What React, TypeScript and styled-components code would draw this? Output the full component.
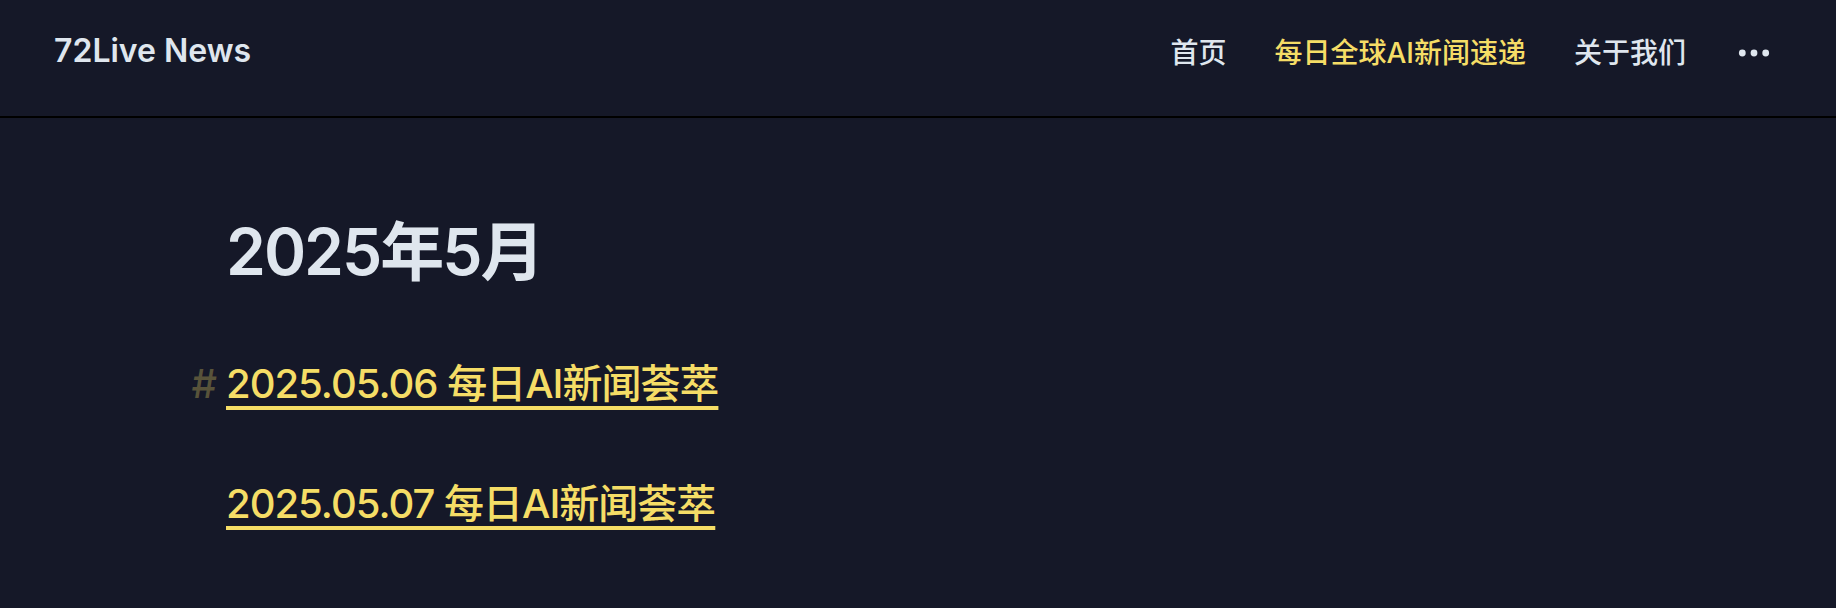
import React from 'react';
import styled, { createGlobalStyle } from 'styled-components';

const GlobalStyle = createGlobalStyle`
  * { box-sizing: border-box; }
  html { background: #151828; }
  body {
    margin: 0;
    background: #151828;
    color: #dfe6ee;
    font-family: Inter, "Noto Sans CJK SC", sans-serif;
    font-weight: 500;
  }
`;

const Header = styled.header`
  display: flex;
  align-items: flex-start;
  justify-content: space-between;
  padding: 27px 62px 39px 54px;
  border-bottom: 2px solid #000;
`;

const Brand = styled.a`
  color: inherit;
  font-size: 32px;
  font-weight: 600;
  line-height: 48px;
  text-decoration: none;
`;

const Nav = styled.nav`
  display: flex;
  align-items: center;
  gap: 48px;
  padding-top: 2px;
`;

const NavLink = styled.a<{ $active?: boolean }>`
  color: ${({ $active }) => ($active ? '#f5dd66' : 'inherit')};
  font-size: 28px;
  line-height: 48px;
  text-decoration: none;
`;

const MoreButton = styled.button`
  display: flex;
  padding: 4px;
  border: 0;
  background: none;
  color: inherit;
`;

const Content = styled.main`
  padding: 94px 226px 64px;
`;

const MonthTitle = styled.h1`
  margin: 0;
  font-size: 64px;
  font-weight: 600;
  line-height: 80px;
  letter-spacing: -2px;
`;

const Entry = styled.h2`
  position: relative;
  margin: 64px 0 0;
  font-size: 40px;
  font-weight: 500;
  line-height: 56px;
  letter-spacing: -1px;
`;

const EntryLink = styled.a`
  color: #f5dd66;
  text-decoration: underline;
  text-decoration-thickness: 4px;
  text-underline-offset: 8px;
`;

const Anchor = styled.a`
  position: absolute;
  right: 100%;
  padding-right: 10px;
  color: #58533a;
  text-decoration: none;
`;

export default function App() {
  return (
    <>
      <GlobalStyle />
      <Header>
        <Brand href="#">72Live News</Brand>
        <Nav>
          <NavLink href="#">首页</NavLink>
          <NavLink href="#" $active>每日全球AI新闻速递</NavLink>
          <NavLink href="#">关于我们</NavLink>
          <MoreButton aria-label="More">
            <svg width="32" height="8" viewBox="0 0 32 8" fill="currentColor">
              <circle cx="4.3" cy="4" r="3.4" />
              <circle cx="16" cy="4" r="3.4" />
              <circle cx="27.7" cy="4" r="3.4" />
            </svg>
          </MoreButton>
        </Nav>
      </Header>
      <Content>
        <MonthTitle>2025年5月</MonthTitle>
        <Entry id="d0506">
          <Anchor href="#d0506">#</Anchor>
          <EntryLink href="#d0506">2025.05.06 每日AI新闻荟萃</EntryLink>
        </Entry>
        <Entry id="d0507">
          <EntryLink href="#d0507">2025.05.07 每日AI新闻荟萃</EntryLink>
        </Entry>
      </Content>
    </>
  );
}
